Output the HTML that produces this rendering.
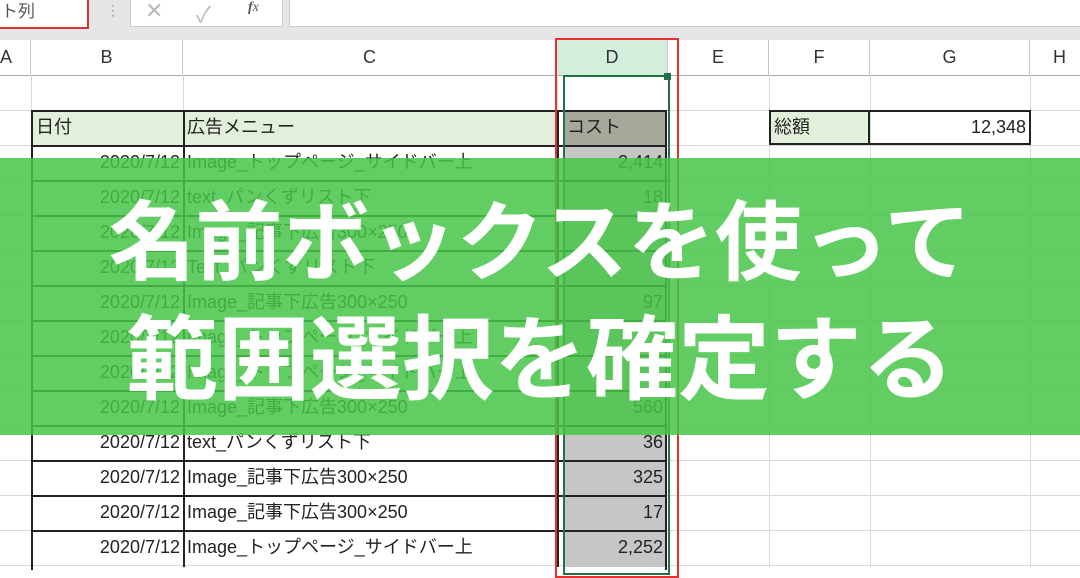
<!DOCTYPE html>
<html><head><meta charset="utf-8"><style>
*{margin:0;padding:0;box-sizing:border-box}
body{width:1080px;height:567px;overflow:hidden;background:#fff;position:relative;font-family:"Liberation Sans","Noto Sans CJK JP",sans-serif}
.a{position:absolute}
.cell{position:absolute;font-size:18px;color:#222;line-height:35px;white-space:nowrap}
.hl{position:absolute;left:0;width:1080px;height:1px;background:#d9d9d9}
.vl{position:absolute;top:75px;width:1px;height:492px;background:#d9d9d9}
.col{position:absolute;top:40px;height:35px;line-height:35px;text-align:center;font-size:18px;color:#333;border-right:1px solid #c8c8c8}
</style></head><body>
<div class="a" style="left:0;top:0;width:1080px;height:40px;background:#e6e6e6"></div>
<div class="a" style="left:-5px;top:-3px;width:94px;height:32px;background:#fff;border:2px solid #e03030;font-size:17px;line-height:26px;color:#555;padding-left:4px">ト列</div>
<div class="a" style="left:106px;top:2px;color:#999;font-size:14px">⋮</div>
<div class="a" style="left:130px;top:0;width:153px;height:27px;background:#fff;border:1px solid #ccc;border-top:none"></div>
<div class="a" style="left:145px;top:-2px;color:#bbb;font-size:22px">✕</div>
<div class="a" style="left:196px;top:-3px;color:#bbb;font-size:22px">✓</div>
<div class="a" style="left:248px;top:0px;color:#555;font-size:14px;font-style:italic;font-family:'Liberation Serif',serif"><b>f</b>x</div>
<div class="a" style="left:289px;top:0;width:800px;height:27px;background:#fff;border:1px solid #ccc;border-top:none"></div>
<div class="col" style="left:0;width:31px;text-align:left">A</div>
<div class="col" style="left:31px;width:152px">B</div>
<div class="col" style="left:183px;width:374px">C</div>
<div class="col" style="left:557px;width:111px;background:#d3eedc">D</div>
<div class="col" style="left:668px;width:101px">E</div>
<div class="col" style="left:769px;width:101px">F</div>
<div class="col" style="left:870px;width:160px">G</div>
<div class="col" style="left:1030px;width:60px">H</div>
<div class="a" style="left:0;top:75px;width:1080px;height:1px;background:#aaa"></div>
<div class="vl" style="left:31px"></div><div class="vl" style="left:183px"></div><div class="vl" style="left:557px"></div><div class="vl" style="left:668px"></div><div class="vl" style="left:769px"></div><div class="vl" style="left:870px"></div><div class="vl" style="left:1030px"></div>
<div class="hl" style="top:110px"></div><div class="hl" style="top:145px"></div><div class="hl" style="top:180px"></div><div class="hl" style="top:215px"></div><div class="hl" style="top:250px"></div><div class="hl" style="top:285px"></div><div class="hl" style="top:320px"></div><div class="hl" style="top:355px"></div><div class="hl" style="top:390px"></div><div class="hl" style="top:425px"></div><div class="hl" style="top:460px"></div><div class="hl" style="top:495px"></div><div class="hl" style="top:530px"></div><div class="hl" style="top:565px"></div>
<div class="a" style="left:31px;top:110px;width:152px;height:35px;background:#e2efda"></div>
<div class="a" style="left:183px;top:110px;width:374px;height:35px;background:#e2efda"></div>
<div class="a" style="left:563px;top:110px;width:103px;height:35px;background:#a8a89a"></div>
<div class="a" style="left:563px;top:145px;width:103px;height:422px;background:#c6c6c6"></div>
<div class="a" style="left:31px;top:110px;width:636px;height:460px;border:2px solid #222;border-bottom:none"></div>
<div class="a" style="left:183px;top:110px;width:2px;height:457px;background:#222"></div>
<div class="a" style="left:557px;top:110px;width:2px;height:457px;background:#222"></div>
<div id="rows"></div>
<div class="cell" style="left:36px;top:110px">日付</div>
<div class="cell" style="left:187px;top:110px">広告メニュー</div>
<div class="cell" style="left:567px;top:110px">コスト</div>
<div class="a" style="left:769px;top:110px;width:101px;height:35px;background:#e2efda;border:2px solid #222"></div>
<div class="a" style="left:868px;top:110px;width:163px;height:35px;border:2px solid #222"></div>
<div class="cell" style="left:774px;top:110px">総額</div>
<div class="cell" style="left:870px;top:110px;width:156px;text-align:right">12,348</div>
<div class="a" style="left:555px;top:38px;width:124px;height:540px;border:2px solid #e83030"></div>
<div class="a" style="left:563px;top:75px;width:107px;height:500px;border:2px solid #217346"></div>
<div class="a" style="left:664px;top:73px;width:7px;height:7px;background:#217346"></div>
<div class="a" style="left:0;top:158px;width:1080px;height:277px;background:rgba(70,196,70,0.85)"></div>
<div class="a" style="left:0;top:186px;width:1080px;text-align:center;color:#fff;font-weight:bold;font-size:87px;line-height:100px;font-family:'Noto Sans CJK JP',sans-serif">名前ボックスを使って</div>
<div class="a" style="left:0;top:303px;width:1080px;text-align:center;color:#fff;font-weight:bold;font-size:92px;line-height:100px;font-family:'Noto Sans CJK JP',sans-serif">範囲選択を確定する</div>
<script>
var d=[["Image_トップページ_サイドバー上","2,414"],["text_パンくずリスト下","18"],["Image_記事下広告300×250",""],["Text_パンくずリスト下",""],["Image_記事下広告300×250","97"],["Image_トップページ_サイドバー上",""],["Image_トップページ_サイドバー上",""],["Image_記事下広告300×250","560"],["text_パンくずリスト下","36"],["Image_記事下広告300×250","325"],["Image_記事下広告300×250","17"],["Image_トップページ_サイドバー上","2,252"]];
var h="";d.forEach(function(r,i){var t=145+i*35;
h+='<div class="a" style="left:31px;top:'+(t)+'px;width:636px;height:2px;background:#222"></div>';
h+='<div class="cell" style="left:31px;top:'+t+'px;width:149px;text-align:right">2020/7/12</div>';
h+='<div class="cell" style="left:187px;top:'+t+'px">'+r[0]+'</div>';
h+='<div class="cell" style="left:563px;top:'+t+'px;width:100px;text-align:right">'+r[1]+'</div>';});
document.getElementById("rows").innerHTML=h;
</script>
</body></html>
